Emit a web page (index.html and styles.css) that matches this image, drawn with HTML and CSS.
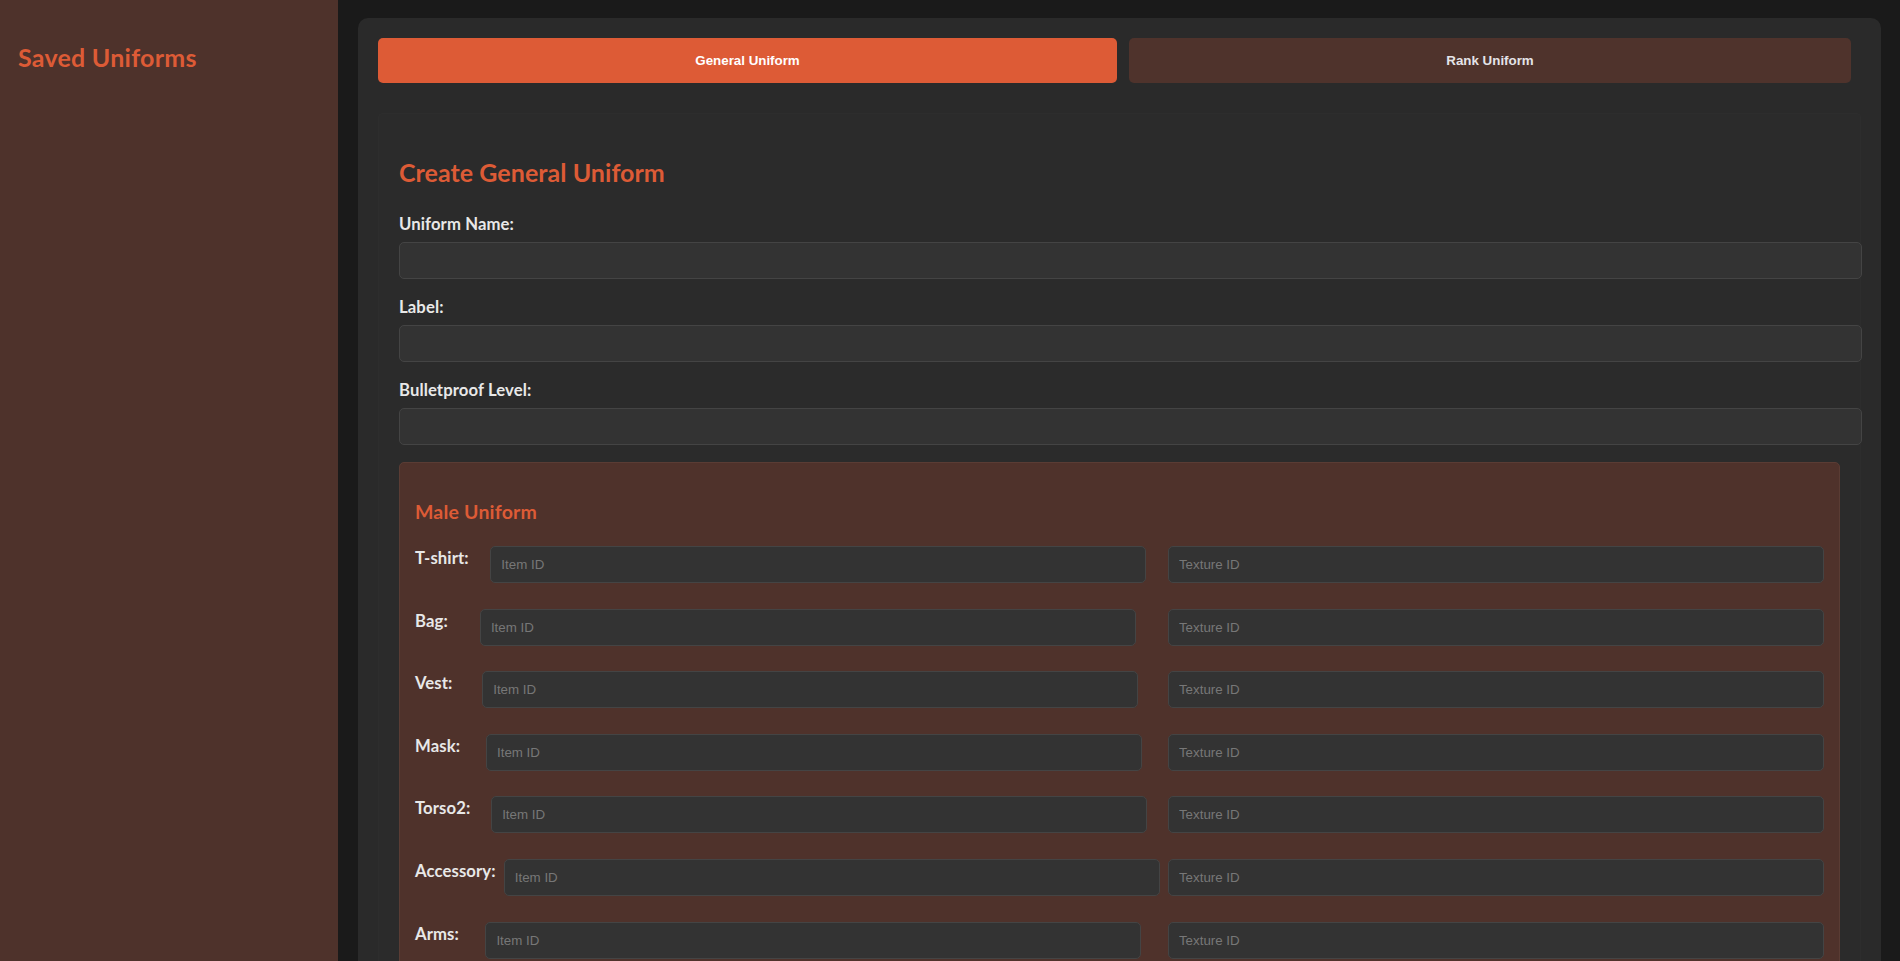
FILE: index.html
```html
<!DOCTYPE html>
<html lang="en">
<head>
<meta charset="utf-8">
<title>Uniform Manager</title>
<link rel="stylesheet" href="styles.css">
</head>
<body>
<aside class="sidebar">
  <h2 class="sidebar-title">Saved Uniforms</h2>
  <div class="saved-list"></div>
</aside>
<main class="main">
  <div class="container">
    <div class="tabs">
      <button class="tab active" type="button">General Uniform</button>
      <button class="tab" type="button">Rank Uniform</button>
    </div>
    <form class="form-panel">
      <h2 class="form-title">Create General Uniform</h2>
      <div class="form-group">
        <label class="field-label" for="u-name">Uniform Name:</label>
        <input class="text-input" id="u-name" type="text">
      </div>
      <div class="form-group">
        <label class="field-label" for="u-label">Label:</label>
        <input class="text-input" id="u-label" type="text">
      </div>
      <div class="form-group last">
        <label class="field-label" for="u-armor">Bulletproof Level:</label>
        <input class="text-input" id="u-armor" type="text">
      </div>
      <section class="gender-panel">
        <h3 class="gender-title">Male Uniform</h3>
        <div class="part-row">
          <label class="part-label">T-shirt:</label>
          <input class="part-input" type="text" placeholder="Item ID">
          <input class="part-input" type="text" placeholder="Texture ID">
        </div>
        <div class="part-row">
          <label class="part-label">Bag:</label>
          <input class="part-input" type="text" placeholder="Item ID">
          <input class="part-input" type="text" placeholder="Texture ID">
        </div>
        <div class="part-row">
          <label class="part-label">Vest:</label>
          <input class="part-input" type="text" placeholder="Item ID">
          <input class="part-input" type="text" placeholder="Texture ID">
        </div>
        <div class="part-row">
          <label class="part-label">Mask:</label>
          <input class="part-input" type="text" placeholder="Item ID">
          <input class="part-input" type="text" placeholder="Texture ID">
        </div>
        <div class="part-row">
          <label class="part-label">Torso2:</label>
          <input class="part-input" type="text" placeholder="Item ID">
          <input class="part-input" type="text" placeholder="Texture ID">
        </div>
        <div class="part-row">
          <label class="part-label">Accessory:</label>
          <input class="part-input" type="text" placeholder="Item ID">
          <input class="part-input" type="text" placeholder="Texture ID">
        </div>
        <div class="part-row">
          <label class="part-label">Arms:</label>
          <input class="part-input" type="text" placeholder="Item ID">
          <input class="part-input" type="text" placeholder="Texture ID">
        </div>
        <div class="part-row">
          <label class="part-label">Pants:</label>
          <input class="part-input" type="text" placeholder="Item ID">
          <input class="part-input" type="text" placeholder="Texture ID">
        </div>
        <div class="part-row">
          <label class="part-label">Shoes:</label>
          <input class="part-input" type="text" placeholder="Item ID">
          <input class="part-input" type="text" placeholder="Texture ID">
        </div>
      </section>
    </form>
  </div>
</main>
</body>
</html>
```

FILE: styles.css
```css
* {
  box-sizing: content-box;
}

html,
body {
  height: 100%;
}

body {
  margin: 0;
  display: flex;
  overflow: hidden;
  background: #1a1a1a;
  font-family: "Lato", "Noto Sans", sans-serif;
  color: #e8e8e8;
}

.sidebar {
  flex: none;
  width: 302px;
  padding: 20px 18px;
  background: #4e322b;
}

.sidebar-title {
  margin: 22px 0 0;
  font-size: 25px;
  font-weight: 700;
  letter-spacing: 0.25px;
  line-height: normal;
  color: #dd5b36;
}

.main {
  flex: 1;
  min-width: 0;
  padding: 18px 19px 0 20px;
  overflow: hidden;
}

.container {
  background: #2a2a2a;
  border-radius: 10px;
  padding: 20px;
}

.tabs {
  display: flex;
  gap: 12px;
  margin: 0 10px 30px 0;
}

.tab {
  flex: 1 1 auto;
  padding: 15px 20px;
  border: none;
  border-radius: 5px;
  background: #4f332c;
  color: #e4e4e8;
  font-family: "Liberation Sans", Arial, sans-serif;
  font-size: 13.33px;
  font-weight: 700;
  line-height: normal;
  cursor: pointer;
}

.tab.active {
  background: #dd5b36;
  color: #ffffff;
}

.form-panel {
  display: block;
  background: #2b2b2b;
  border: 1px solid #2d2d2d;
  border-radius: 4px;
  padding: 20px;
}

.form-title {
  margin: 23px 0 27px;
  font-size: 25px;
  font-weight: 700;
  letter-spacing: 0.05px;
  line-height: normal;
  color: #dd5b36;
}

.form-group {
  margin-bottom: 18px;
}

.form-group.last {
  margin-bottom: 17px;
}

.field-label {
  display: block;
  margin-bottom: 8px;
  font-size: 16.7px;
  font-weight: 700;
  letter-spacing: 0.1px;
  line-height: 20px;
  color: #e8e8e8;
}

.text-input,
.part-input {
  padding: 10px;
  border: 1px solid #444444;
  border-radius: 5px;
  background: #333333;
  color: #eeeeee;
  font-family: "Liberation Sans", Arial, sans-serif;
  font-size: 13.33px;
  line-height: normal;
  outline: none;
}

.text-input {
  display: block;
  width: 100%;
}

.text-input::placeholder,
.part-input::placeholder {
  color: #777777;
}

.gender-panel {
  background: #4f322b;
  border: 1px solid #5a3c34;
  border-radius: 5px;
  padding: 15px;
}

.gender-title {
  margin: 22px 0 23px;
  font-size: 19.5px;
  font-weight: 700;
  letter-spacing: 0.2px;
  line-height: normal;
  color: #dd5b36;
}

.part-row {
  display: flex;
  justify-content: space-between;
  align-items: flex-start;
  margin-bottom: 25.6px;
}

.part-label {
  margin-top: 2px;
  font-size: 16.7px;
  font-weight: 700;
  letter-spacing: 0.1px;
  line-height: normal;
  white-space: nowrap;
  color: #e8e8e8;
}

.part-input {
  flex: none;
  width: 45%;
}
```
